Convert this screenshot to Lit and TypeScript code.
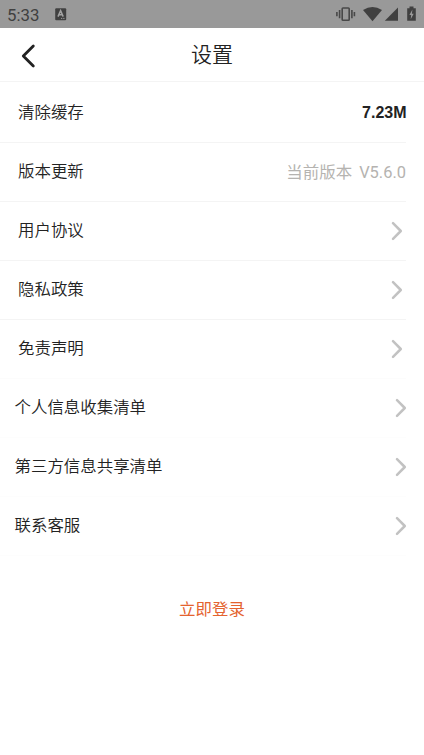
import { LitElement, html, css, svg, nothing } from "lit";
import { customElement, property } from "lit/decorators.js";

@customElement("status-bar")
class StatusBar extends LitElement {
  static styles = css`
    :host {
      display: flex;
      align-items: center;
      height: 28px;
      box-sizing: border-box;
      padding: 0 7px;
      background: #999;
      color: #404040;
      font: 16.8px/28px Roboto, sans-serif;
    }
    .time { padding-top: 3px; width: 48px; line-height: 25px; }
    .icons { margin-left: auto; }
    svg { display: block; }
  `;
  render() {
    return html`
      <span class="time">5:33</span>
      <svg width="12" height="28" viewBox="0 0 12 28">
        <rect x="0.2" y="8.2" width="11" height="12" rx="1" fill="#404040" />
        <path d="M3 16.6 5.6 10.6 8.2 16.6M4 14.8H7.2" fill="none" stroke="#a2a2a2" stroke-width="1.5" />
        <path d="M6 18.4H7.3M8.2 18.4H9.5" stroke="#999" stroke-width="1" />
      </svg>
      <svg class="icons" width="81" height="28" viewBox="336 0 81 28">
        <g fill="none" stroke="#484848" stroke-width="1.6">
          <rect x="342.2" y="8" width="7" height="12.2" rx="0.8" />
          <path d="M339.6 10V18.2M336.9 12V16.2M351.9 10V18.2M354.4 12V16.2" />
        </g>
        <path d="M363 10Q372.5 3.8 382 10L372.5 21.3Z" fill="#404040" />
        <path d="M398 7.6V20.8H384.8Z" fill="#404040" />
        <path d="M407.2 8.2H409.5V6.4H413.5V8.2H415.8V20.8H407.2Z" fill="#404040" />
        <path d="M412.4 9.6 409.4 15H411.2L410.7 19.2 413.7 13.7H411.9Z" fill="#999" />
      </svg>
    `;
  }
}

@customElement("setting-row")
class SettingRow extends LitElement {
  @property() label = "";
  @property() value = "";
  @property() tone = "";
  @property({ type: Boolean }) arrow = false;

  static styles = css`
    :host { display: block; height: 59.1px; }
    :host([wide]) { --pad-left: 14.5px; --line: #fdfdfd; }
    :host([faint]) { --line: #fcfcfc; }
    .row {
      display: flex;
      height: 100%;
      box-sizing: border-box;
      align-items: center;
      justify-content: space-between;
      margin-right: 18px;
      padding-left: var(--pad-left, 18px);
      border-bottom: 1px solid var(--line, #f4f4f4);
      color: #222;
      font: 16.45px/24px Roboto, "Noto Sans CJK SC", sans-serif;
    }
    .label { margin-top: 0.2px; font-weight: 350; }
    :host([wide]) .label { margin-top: -0.6px; }
    .strong {
      margin: 0 -0.5px 0 0;
      font: bold 16px/24px "Liberation Sans", sans-serif;
    }
    .muted { margin-top: 2px; color: #b5b3b0; word-spacing: 3px; }
    .chevron { display: block; margin-right: 3px; }
    :host([wide]) .chevron { margin-right: -0.5px; }
  `;
  render() {
    return html`<div class="row">
      <span class="label">${this.label}</span>
      ${this.value ? html`<span class=${this.tone}>${this.value}</span>` : nothing}
      ${this.arrow
        ? html`<svg class="chevron" width="12" height="20" viewBox="0 0 12 20">
            ${svg`<path d="M2 2.2 9.8 10 2 17.8" fill="none" stroke="#c2c2c2" stroke-width="2.5" stroke-linecap="round" stroke-linejoin="round"/>`}
          </svg>`
        : nothing}
    </div>`;
  }
}

@customElement("app-root")
class AppRoot extends LitElement {
  static styles = css`
    :host {
      display: flex;
      flex-direction: column;
      height: 755px;
      background: #fff;
      font-family: Roboto, "Noto Sans CJK SC", sans-serif;
    }
    .header {
      display: grid;
      grid-template-columns: 60px 1fr 60px;
      align-items: center;
      height: 54px;
      box-sizing: border-box;
      border-bottom: 1px solid #f4f4f4;
    }
    .back { display: block; margin: 2px 0 0 20px; }
    .title { padding-top: 1px; text-align: center; font-size: 21px; line-height: 30px; color: #222; font-weight: 350; }
    .list { padding-top: 1.6px; }
    .login {
      margin-top: 42px;
      text-align: center;
      font-size: 16.45px;
      line-height: 24px;
      color: #e4632f;
    }
  `;
  render() {
    const links = ["用户协议", "隐私政策", "免责声明"];
    const wideLinks = ["个人信息收集清单", "第三方信息共享清单", "联系客服"];
    return html`
      <status-bar></status-bar>
      <div class="header">
        <svg class="back" width="16" height="26" viewBox="0 0 16 26">
          <path d="M13.3 3 3.3 13 13.3 23" fill="none" stroke="#222" stroke-width="2.8" stroke-linecap="round" stroke-linejoin="round" />
        </svg>
        <span class="title">设置</span>
      </div>
      <div class="list">
        <setting-row label="清除缓存" value="7.23M" tone="strong"></setting-row>
        <setting-row label="版本更新" value="当前版本 V5.6.0" tone="muted"></setting-row>
        ${links.map((l, i) => html`<setting-row label=${l} arrow ?faint=${i === links.length - 1}></setting-row>`)}
        ${wideLinks.map((l) => html`<setting-row label=${l} arrow wide></setting-row>`)}
      </div>
      <div class="login">立即登录</div>
    `;
  }
}
